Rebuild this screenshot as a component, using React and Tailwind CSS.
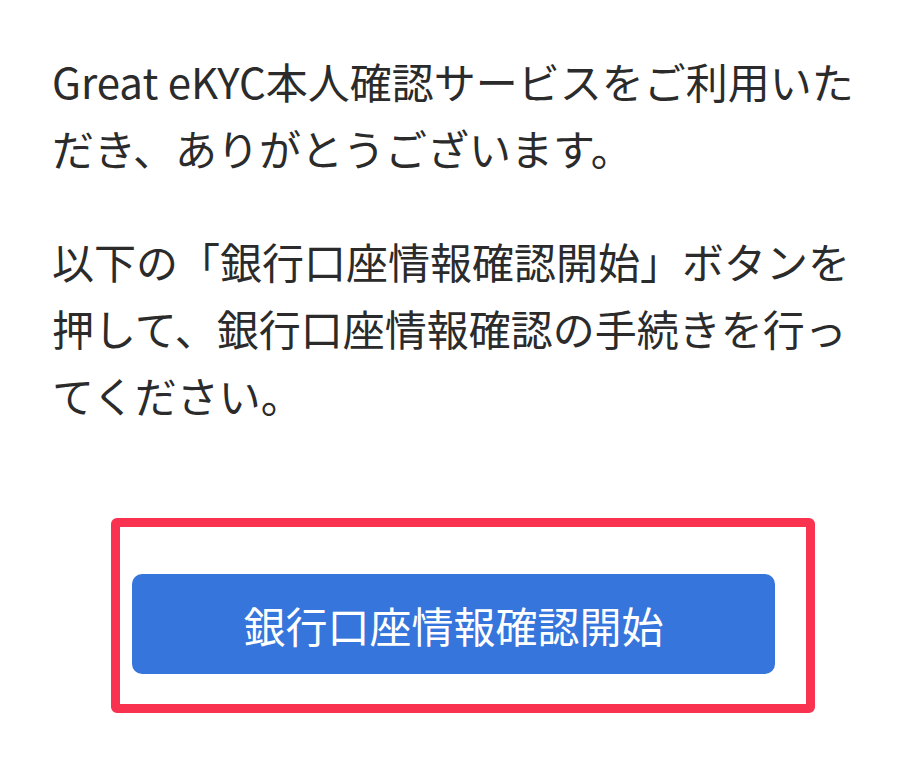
export default function App() {
  return (
    <div
      className="min-h-screen bg-white px-[52px] pt-[47px] text-[#2b2b2b]"
      style={{ fontFamily: '"Noto Sans CJK JP", "Noto Sans", sans-serif' }}
    >
      <div className="text-[42px] leading-[67px]">
        <p>Great eKYC本人確認サービスをご利用いただき、ありがとうございます。</p>
        <p className="mt-[46px]">
          以下の「銀行口座情報確認開始」ボタンを押して、銀行口座情報確認の手続きを行ってください。
        </p>
      </div>

      {/* highlighted action */}
      <div className="ml-[59px] mt-[90px] w-[704px] rounded-[6px] border-[9px] border-[#f8324f] pb-[30px] pl-[12px] pr-[31px] pt-[47px]">
        <button className="flex h-[100px] w-full items-center justify-center rounded-[10px] bg-[#3575dc] text-[42px] text-white">
          銀行口座情報確認開始
        </button>
      </div>
    </div>
  );
}
